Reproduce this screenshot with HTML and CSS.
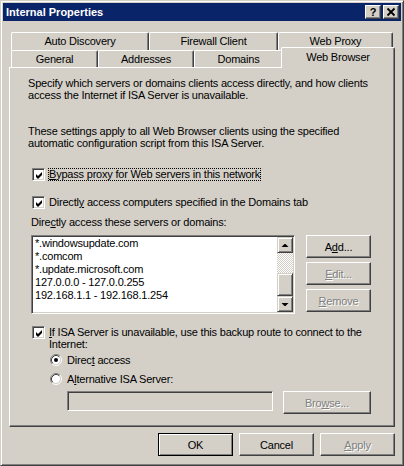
FILE: index.html
```html
<!DOCTYPE html>
<html>
<head>
<meta charset="utf-8">
<title>Internal Properties</title>
<link rel="stylesheet" href="styles.css">
</head>
<body>
<div class="window">
  <div class="titlebar">
    <span class="title">Internal Properties</span>
    <div class="caption-btns">
      <div class="cbtn help">?</div>
      <div class="cbtn close">
        <svg width="14" height="12" viewBox="0 0 14 12"><path d="M3.5 2.5 L10.5 9.5 M10.5 2.5 L3.5 9.5" stroke="#000" stroke-width="1.8" fill="none"/></svg>
      </div>
    </div>
  </div>

  <div class="tabs">
    <div class="tabrow back">
      <div class="tab t-auto">Auto Discovery</div>
      <div class="tab t-fw">Firewall Client</div>
      <div class="tab t-proxy">Web Proxy</div>
    </div>
    <div class="tabrow front">
      <div class="tab t-gen">General</div>
      <div class="tab t-addr">Addresses</div>
      <div class="tab t-dom">Domains</div>
      <div class="tab t-web selected">Web Browser</div>
    </div>
  </div>

  <div class="panel">
    <p class="desc first">Specify which servers or domains clients access directly, and how clients access the Internet if ISA Server is unavailable.</p>
    <p class="desc second">These settings apply to all Web Browser clients using the specified automatic configuration script from this ISA Server.</p>

    <div class="check cb1">
      <span class="box"><svg width="9" height="9" viewBox="0 0 9 9"><polygon points="1,3 3,5 7,1 7,4 3,8 1,6" fill="#000"/></svg></span>
      <span class="clabel focus"><u>B</u>ypass proxy for Web servers in this network</span>
    </div>
    <div class="check cb2">
      <span class="box"><svg width="9" height="9" viewBox="0 0 9 9"><polygon points="1,3 3,5 7,1 7,4 3,8 1,6" fill="#000"/></svg></span>
      <span class="clabel">Directl<u>y</u> access computers specified in the Domains tab</span>
    </div>

    <div class="listlabel">Dire<u>c</u>tly access these servers or domains:</div>
    <div class="listrow">
      <div class="listbox">
        <div class="items">
          <div class="item">*.windowsupdate.com</div>
          <div class="item">*.comcom</div>
          <div class="item">*.update.microsoft.com</div>
          <div class="item">127.0.0.0 - 127.0.0.255</div>
          <div class="item">192.168.1.1 - 192.168.1.254</div>
        </div>
        <div class="scrollbar">
          <div class="sbtn"><svg width="12" height="12" viewBox="0 0 12 12"><polygon points="2.5,8 5.5,5 6.5,5 9.5,8" fill="#000"/></svg></div>
          <div class="track"></div>
          <div class="thumb"></div>
          <div class="sbtn"><svg width="12" height="12" viewBox="0 0 12 12"><polygon points="2.5,5 9.5,5 6.5,8 5.5,8" fill="#000"/></svg></div>
        </div>
      </div>
      <div class="sidebtns">
        <div class="btn side">A<u>d</u>d...</div>
        <div class="btn side disabled"><u>E</u>dit...</div>
        <div class="btn side disabled"><u>R</u>emove</div>
      </div>
    </div>

    <div class="check cb3">
      <span class="box"><svg width="9" height="9" viewBox="0 0 9 9"><polygon points="1,3 3,5 7,1 7,4 3,8 1,6" fill="#000"/></svg></span>
      <div class="clabel multi">
        <div class="mline"><u>I</u>f ISA Server is unavailable, use this backup route to connect to the</div>
        <div class="mline">Internet:</div>
      </div>
    </div>
    <div class="radio r1">
      <svg class="rcircle" width="12" height="12" viewBox="0 0 12 12">
        <circle cx="6" cy="6" r="4.5" fill="#fff"/>
        <path d="M2.11 9.89 A5.5 5.5 0 0 1 9.89 2.11" stroke="#808080" fill="none"/>
        <path d="M9.89 2.11 A5.5 5.5 0 0 1 2.11 9.89" stroke="#fff" fill="none"/>
        <path d="M2.82 9.18 A4.5 4.5 0 0 1 9.18 2.82" stroke="#404040" fill="none"/>
        <path d="M9.18 2.82 A4.5 4.5 0 0 1 2.82 9.18" stroke="#d4d0c8" fill="none"/>
        <circle cx="6" cy="6" r="2" fill="#000"/>
      </svg>
      <span class="rlabel">Direc<u>t</u> access</span>
    </div>
    <div class="radio r2">
      <svg class="rcircle" width="12" height="12" viewBox="0 0 12 12">
        <circle cx="6" cy="6" r="4.5" fill="#fff"/>
        <path d="M2.11 9.89 A5.5 5.5 0 0 1 9.89 2.11" stroke="#808080" fill="none"/>
        <path d="M9.89 2.11 A5.5 5.5 0 0 1 2.11 9.89" stroke="#fff" fill="none"/>
        <path d="M2.82 9.18 A4.5 4.5 0 0 1 9.18 2.82" stroke="#404040" fill="none"/>
        <path d="M9.18 2.82 A4.5 4.5 0 0 1 2.82 9.18" stroke="#d4d0c8" fill="none"/>
      </svg>
      <span class="rlabel">A<u>l</u>ternative ISA Server:</span>
    </div>
    <div class="textrow">
      <div class="textbox"></div>
      <div class="btn browse disabled">Bro<u>w</u>se...</div>
    </div>
  </div>

  <div class="footer">
    <div class="btn foot default">OK</div>
    <div class="btn foot">Cancel</div>
    <div class="btn foot disabled"><u>A</u>pply</div>
  </div>
</div>
</body>
</html>
```

FILE: styles.css
```css
* { box-sizing: border-box; }
html, body { margin: 0; padding: 0; }
body {
  width: 404px;
  height: 466px;
  overflow: hidden;
  background: #d4d0c8;
  font-family: "Liberation Sans", Arial, sans-serif;
  font-size: 11px;
  letter-spacing: -0.2px;
  color: #000;
}
u { text-decoration: underline; text-underline-offset: 1px; }

.window {
  width: 404px;
  height: 466px;
  border: 1px solid;
  border-color: #d4d0c8 #404040 #404040 #d4d0c8;
  box-shadow: inset 1px 1px 0 #fff, inset -1px -1px 0 #808080;
  padding: 2px;
  display: flex;
  flex-direction: column;
}

/* title bar */
.titlebar {
  height: 18px;
  background: #0a246a;
  color: #fff;
  display: flex;
  align-items: center;
  padding-left: 3px;
}
.title { font-weight: bold; font-size: 11px; letter-spacing: 0; }
.caption-btns {
  margin-left: auto;
  margin-right: 2px;
  display: flex;
  gap: 2px;
}
.cbtn {
  width: 16px;
  height: 14px;
  background: #d4d0c8;
  border: 1px solid;
  border-color: #fff #404040 #404040 #fff;
  box-shadow: inset -1px -1px 0 #808080;
  color: #000;
  font-weight: bold;
  font-size: 11px;
  line-height: 12px;
  letter-spacing: 0;
  text-align: center;
  display: flex;
  align-items: center;
  justify-content: center;
}
.cbtn svg { display: block; }

/* tabs */
.tabs {
  margin: 11px 0 0 6px;
  width: 386px;
}
.tabrow {
  display: flex;
  padding-left: 2px;
}
.tabrow.back { height: 18px; }
.tabrow.front { height: 17px; }
.tab {
  height: 100%;
  border-top: 1px solid #fff;
  border-left: 1px solid #fff;
  border-right: 1px solid #404040;
  box-shadow: inset -1px 0 0 #808080;
  border-radius: 2px 2px 0 0;
  text-align: center;
  line-height: 16px;
  background: #d4d0c8;
  white-space: nowrap;
}
.t-auto { width: 138px; }
.t-fw { width: 129px; }
.t-proxy { width: 115px; }
.t-gen { width: 87px; }
.t-addr { width: 96px; }
.t-dom { width: 89px; }
.tab.selected {
  width: 114px;
  height: 21px;
  margin: -3px -2px 0 -2px;
  padding-top: 1px;
  position: relative;
  z-index: 1;
}

/* panel */
.panel {
  width: 386px;
  height: 360px;
  margin-left: 6px;
  border-top: 1px solid #fff;
  border-left: 1px solid #fff;
  border-right: 1px solid #404040;
  border-bottom: 1px solid #404040;
  box-shadow: inset -1px -1px 0 #808080;
  padding-left: 18px;
}
.desc {
  margin: 0;
  line-height: 12px;
  width: 356px;
}
.desc.first { margin-top: 9px; }
.desc.second { margin-top: 24px; }

.check {
  display: flex;
  align-items: center;
  margin-left: 4px;
}
.check.cb1 { margin-top: 19px; height: 13px; }
.check.cb2 { margin-top: 15px; height: 13px; }
.check.cb3 { margin-top: 12px; align-items: flex-start; }
.box {
  width: 13px;
  height: 13px;
  flex: none;
  background: #fff;
  border: 1px solid;
  border-color: #808080 #fff #fff #808080;
  box-shadow: inset 1px 1px 0 #404040, inset -1px -1px 0 #d4d0c8;
  padding: 1px;
}
.box svg { display: block; margin: 1px 0 0 1px; }
.clabel {
  margin-left: 3px;
  border: 1px dotted transparent;
  line-height: 11px;
  white-space: nowrap;
}
.clabel.focus { border-color: #000; }
.clabel.multi {
  line-height: 12px;
  border: none;
  margin-left: 4px;
}
.mline { white-space: nowrap; }

.listlabel {
  margin: 7px 0 0 3px;
  line-height: 12px;
}
.listrow {
  display: flex;
  margin: 7px 0 0 3px;
}
.listbox {
  width: 264px;
  height: 79px;
  border: 1px solid;
  border-color: #808080 #fff #fff #808080;
  box-shadow: inset 1px 1px 0 #404040, inset -1px -1px 0 #d4d0c8;
  background: #fff;
  padding: 1px;
  display: flex;
}
.items {
  flex: 1;
  padding-left: 2px;
}
.item { line-height: 13px; white-space: nowrap; }
.scrollbar {
  width: 16px;
  display: flex;
  flex-direction: column;
}
.sbtn, .thumb {
  background: #d4d0c8;
  border: 1px solid;
  border-color: #d4d0c8 #404040 #404040 #d4d0c8;
  box-shadow: inset 1px 1px 0 #fff, inset -1px -1px 0 #808080;
}
.sbtn {
  height: 16px;
  display: flex;
  align-items: center;
  justify-content: center;
}
.sbtn svg { display: block; }
.track {
  height: 20px;
  background: repeating-conic-gradient(#fff 0 25%, #d4d0c8 0 50%) 0 0 / 2px 2px;
}
.thumb { height: 23px; }

.sidebtns {
  margin-left: 11px;
  display: flex;
  flex-direction: column;
  gap: 4px;
}

.btn {
  height: 23px;
  background: #d4d0c8;
  border: 1px solid;
  border-color: #fff #404040 #404040 #fff;
  box-shadow: inset -1px -1px 0 #808080;
  display: flex;
  align-items: center;
  justify-content: center;
  white-space: nowrap;
}
.btn.side { width: 65px; }
.btn.disabled {
  color: #808080;
  text-shadow: 1px 1px 0 #fff;
}
.btn.default {
  border-color: #000;
  box-shadow: inset 1px 1px 0 #fff, inset -1px -1px 0 #808080;
}

.radio {
  display: flex;
  align-items: center;
  height: 13px;
  margin-left: 22px;
}
.radio.r1 { margin-top: 3px; }
.radio.r2 { margin-top: 6px; }
.rcircle { display: block; flex: none; }
.rlabel { margin-left: 5px; }

.textrow {
  display: flex;
  align-items: flex-start;
  margin: 6px 0 0 39px;
}
.textbox {
  width: 206px;
  height: 20px;
  border: 1px solid;
  border-color: #808080 #fff #fff #808080;
  box-shadow: inset 1px 1px 0 #404040, inset -1px -1px 0 #d4d0c8;
  background: #d4d0c8;
}
.btn.browse {
  width: 88px;
  margin-left: 10px;
}

.footer {
  display: flex;
  justify-content: flex-end;
  gap: 6px;
  margin-top: 6px;
  padding-right: 6px;
}
.btn.foot { width: 75px; }
```
